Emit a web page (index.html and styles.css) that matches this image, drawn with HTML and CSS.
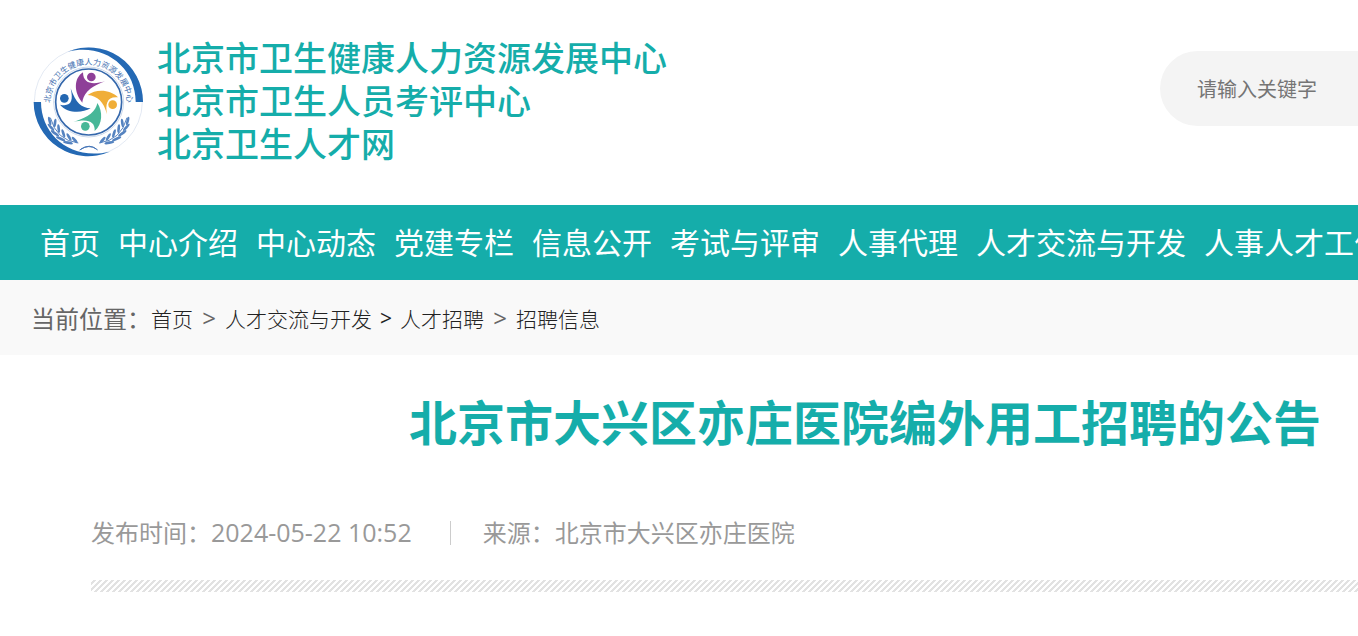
FILE: index.html
```
<!DOCTYPE html>
<html lang="zh-CN">
<head>
  <meta charset="UTF-8">
  <title>北京市大兴区亦庄医院编外用工招聘的公告</title>
  <link rel="stylesheet" href="styles.css">
</head>
<body>
  <div class="page">
    <header class="header">
      <a href="#" class="logo">
        <svg class="logo-icon" viewBox="36 36 330 330" aria-hidden="true">
          <defs>
            <path id="ring" d="M88 204 A115 115 0 0 1 318 204"/>
            <g id="laurel">
              <path d="M88 248 Q106 316 172 324" fill="none" stroke="#5b86c0" stroke-width="3"/>
              <g fill="#5583c0">
                <ellipse cx="86" cy="258" rx="4" ry="13" transform="rotate(-14 86 258)"/>
                <ellipse cx="102" cy="264" rx="4" ry="13" transform="rotate(8 102 264)"/>
                <ellipse cx="90" cy="277" rx="4" ry="14" transform="rotate(-42 90 277)"/>
                <ellipse cx="113" cy="281" rx="4" ry="13" transform="rotate(-6 113 281)"/>
                <ellipse cx="102" cy="295" rx="4" ry="15" transform="rotate(-54 102 295)"/>
                <ellipse cx="127" cy="295" rx="4" ry="13" transform="rotate(-18 127 295)"/>
                <ellipse cx="119" cy="311" rx="4" ry="15" transform="rotate(-66 119 311)"/>
                <ellipse cx="144" cy="306" rx="4" ry="13" transform="rotate(-30 144 306)"/>
                <ellipse cx="141" cy="323" rx="4" ry="15" transform="rotate(-78 141 323)"/>
                <ellipse cx="161" cy="315" rx="4" ry="12" transform="rotate(-42 161 315)"/>
              </g>
            </g>
          </defs>
          <circle cx="202" cy="200" r="162" fill="#fff" stroke="#d5deed" stroke-width="2"/>
          <path fill="#2469b4" d="M140 50 A163 163 0 0 1 366 201 L344 201 C345 98 250 22 140 50z"/>
          <path fill="#2469b4" d="M38 201 L60 201 C60 300 150 378 266 350 A163 163 0 0 1 38 201z"/>
          <circle cx="203" cy="201" r="105" fill="#fff" stroke="#b2c6e1" stroke-width="2"/>
          <circle cx="203" cy="201" r="99" fill="none" stroke="#3568ac" stroke-width="5"/>
          <text class="logo-ring"><textPath href="#ring">北京市卫生健康人力资源发展中心</textPath></text>
          <use href="#laurel"/>
          <use href="#laurel" transform="matrix(-1 0 0 1 406 0)"/>
          <path d="M180 342 Q206 324 230 345 M176 345 Q204 326 226 342" fill="none" stroke="#4676b8" stroke-width="3"/>
          <path fill="#8e3f98" d="M186 112 C158 130 158 172 184 203 C187 181 199 158 252 139 C222 148 186 151 186 112z"/>
          <circle cx="211" cy="126" r="13" fill="#8e3f98"/>
          <path fill="#f0ae38" d="M200 180 C226 160 270 164 291 187 C257 184 253 207 258 238 C248 200 230 183 200 180z"/>
          <circle cx="275" cy="209" r="13" fill="#f0ae38"/>
          <path fill="#47b798" d="M229 204 C246 229 245 269 221 288 C223 259 200 250 157 261 C205 246 224 228 229 204z"/>
          <circle cx="193" cy="274" r="13" fill="#47b798"/>
          <path fill="#2467b1" d="M117 209 C139 235 181 236 209 220 C182 219 164 204 149 160 C158 199 150 216 117 209z"/>
          <circle cx="130" cy="190" r="13" fill="#2467b1"/>
        </svg>
        <span class="logo-text">
          <span>北京市卫生健康人力资源发展中心</span>
          <span>北京市卫生人员考评中心</span>
          <span>北京卫生人才网</span>
        </span>
      </a>
      <form class="search">
        <input type="text" class="search-input" placeholder="请输入关键字" aria-label="请输入关键字">
      </form>
    </header>

    <nav class="nav">
      <a href="#">首页</a>
      <a href="#">中心介绍</a>
      <a href="#">中心动态</a>
      <a href="#">党建专栏</a>
      <a href="#">信息公开</a>
      <a href="#">考试与评审</a>
      <a href="#">人事代理</a>
      <a href="#">人才交流与开发</a>
      <a href="#">人事人才工作</a>
    </nav>

    <div class="crumbs">
      <span>当前位置：</span>
      <a href="#">首页</a>
      <span class="sep">&gt;</span>
      <a href="#">人才交流与开发</a>
      <span class="sep sep-small">&gt;</span>
      <a href="#">人才招聘</a>
      <span class="sep">&gt;</span>
      <a href="#">招聘信息</a>
    </div>

    <main class="article">
      <h1>北京市大兴区亦庄医院编外用工招聘的公告</h1>
      <div class="info">
        <span>发布时间：<time datetime="2024-05-22T10:52">2024-05-22 10:52</time></span>
        <span class="source">来源：北京市大兴区亦庄医院</span>
      </div>
      <div class="stripes"></div>
    </main>
  </div>
</body>
</html>
```
FILE: styles.css
```
* {
  box-sizing: border-box;
}

body {
  margin: 0;
  overflow-x: hidden;
  background: #fff;
  color: #666;
  font-family: "Open Sans", "Noto Sans CJK SC", sans-serif;
  font-size: 24px;
}

a {
  color: inherit;
  text-decoration: none;
}

/* desktop layout, narrower windows cut it on the right */
.page {
  min-width: 1730px;
}

.header {
  display: flex;
  justify-content: space-between;
  align-items: flex-start;
  padding: 35px 31px 41px 33px;
}

.logo {
  display: flex;
  align-items: flex-start;
  gap: 14px;
}

.logo-icon {
  width: 110px;
  height: 110px;
  margin-top: 12px;
}

.logo-ring {
  font-family: "Noto Sans CJK SC", sans-serif;
  font-size: 24px;
  fill: #3f6fb0;
}

.logo-text {
  display: flex;
  flex-direction: column;
  color: #15adaa;
  font-family: "Noto Sans CJK SC", sans-serif;
  font-size: 34px;
  font-weight: 500;
  line-height: 43px;
}

.search {
  width: 539px;
  margin-top: 16px;
}

.search-input {
  width: 100%;
  height: 75px;
  padding: 0 37px;
  border: none;
  border-radius: 38px;
  background: #f4f4f4;
  font-family: "Noto Sans CJK SC", sans-serif;
  font-size: 20px;
}
.search-input::placeholder {
  color: #757575;
}

.nav {
  display: flex;
  gap: 18px;
  padding: 0 40px;
  background: #15adaa;
  color: #fff;
  font-size: 30px;
  line-height: 75px;
  white-space: nowrap;
}

.crumbs {
  display: flex;
  align-items: center;
  height: 75px;
  padding: 0 31px;
  background: #f9f9f9;
}
.crumbs a {
  color: #222;
  font-size: 21px;
  font-weight: 300;
}

.sep {
  width: 32px;
  text-align: center;
}
.sep-small {
  width: 28px;
  color: #222;
  font-size: 21px;
}

.article {
  padding: 32px 91px;
}
.article h1 {
  margin: 0;
  color: #15adaa;
  font-size: 48px;
  line-height: 72px;
  text-align: center;
}

.info {
  display: flex;
  align-items: center;
  margin-top: 55px;
  color: #999;
  line-height: 36px;
}
.info time {
  font-size: 25px;
}

.source {
  display: flex;
  align-items: center;
}
.source::before {
  content: "";
  width: 1px;
  height: 24px;
  margin: 0 32px 0 38px;
  background: #ccc;
}

.stripes {
  height: 12px;
  margin-top: 29px;
  background: linear-gradient(135deg, #fff 25%, #e2e2e2 25%, #e2e2e2 50%, #fff 50%, #fff 75%, #e2e2e2 75%);
  background-size: 6px 6px;
}
```
